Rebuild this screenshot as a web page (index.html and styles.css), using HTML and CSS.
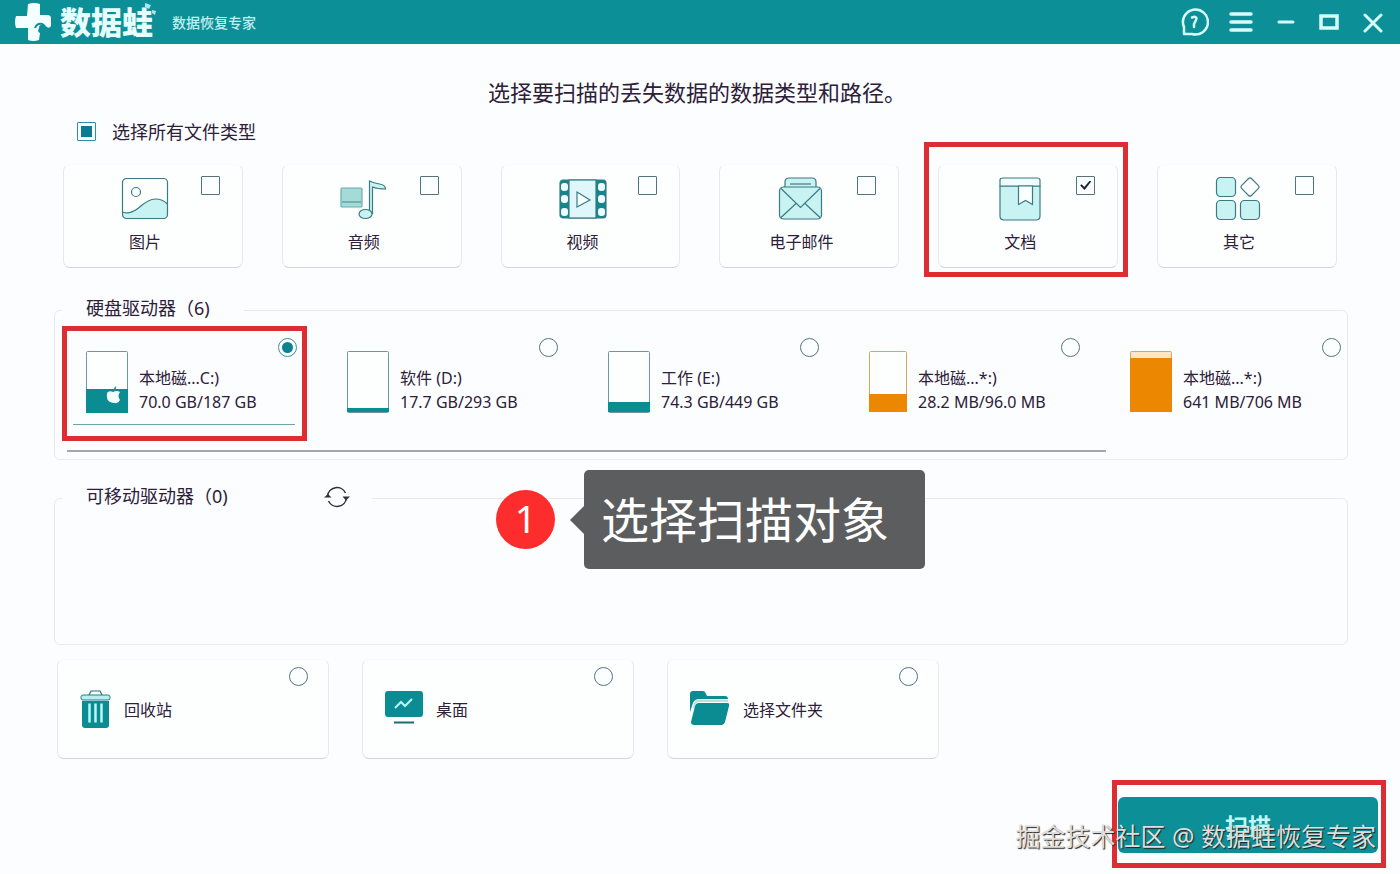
FILE: index.html
```html
<!DOCTYPE html>
<html lang="zh-CN">
<head>
<meta charset="utf-8">
<title>数据蛙 数据恢复专家</title>
<link rel="stylesheet" href="styles.css">
</head>
<body>
<header class="titlebar">
  <svg class="logo" width="36" height="40" viewBox="0 0 36 40" aria-hidden="true">
    <path fill="#f4ffff" d="M13 2q6-2 12 0v11h7q4 0 4 3v8q-2 3-4 1l-3-2q-5-1-5 3l-1 3q1 2 2 2l-1 7q-6 2-11 0V26H1q-2-6 0-12h11z"/>
    <path fill="none" stroke="#0b8f97" stroke-width="2" d="M20 26q2-5 7-4l3 2"/>
  </svg>
  <span class="brand">数据蛙<svg class="splash" width="12" height="14" viewBox="0 0 12 14" aria-hidden="true"><path fill="#a5e9f4" d="M1 1l6 2-2 4-4-2zM8 8l4 1-1 4-3-2z"/></svg></span>
  <span class="subtitle">数据恢复专家</span>
  <nav class="window-controls">
    <button type="button" aria-label="帮助"><svg width="30" height="30" viewBox="0 0 30 30"><path d="M5 27v-7A12.500 12.500 0 1 1 13 27z" stroke-width="2.500"/><path d="M13 10.500q4-1.500 4.500.5 0 1.500-1.500 4l-1 2v3" stroke-width="2.500"/></svg></button>
    <button type="button" aria-label="菜单"><svg width="24" height="24" viewBox="0 0 24 24"><path d="M2 4h20M2 12h20M2 20h20" stroke-width="3.500"/></svg></button>
    <button type="button" aria-label="最小化"><svg width="18" height="24" viewBox="0 0 18 24"><path d="M2 12h14" stroke-width="3"/></svg></button>
    <button type="button" aria-label="最大化"><svg width="20" height="24" viewBox="0 0 20 24"><path d="M2 6h16v12H2z" stroke-width="3.500" stroke-linejoin="miter"/></svg></button>
    <button type="button" aria-label="关闭"><svg width="20" height="24" viewBox="0 0 20 24"><path d="M2 5l16 16M18 5L2 21" stroke-width="3"/></svg></button>
  </nav>
</header>

<main class="content">
  <h1 class="heading">选择要扫描的丢失数据的数据类型和路径。</h1>
  <label class="select-all"><input class="box partial" type="checkbox">选择所有文件类型</label>

  <section class="types">
    <label class="card type">
      <span class="type-body">
        <svg class="line-icon" width="48" height="46" viewBox="0 0 48 46"><path class="tint" stroke="none" d="M1.500 36q7 3 16-4 10-9 17-9 7 0 12 5v10q0 4-4 4h-37q-4 0-4-4z"/><rect x="1.500" y="2.500" width="45" height="40" rx="4"/><circle cx="15" cy="16" r="4.500"/><path d="M1.500 36q7 3 16-4 10-9 17-9 7 0 12 5"/></svg>
        <span>图片</span>
      </span>
      <input class="box" type="checkbox">
    </label>
    <label class="card type">
      <span class="type-body">
        <svg class="line-icon" width="48" height="46" viewBox="0 0 48 46"><rect x="1" y="12" width="21" height="19" rx="1" fill="#a5dad6" stroke="#68aeb0"/><path stroke="#4b9b9e" d="M2 26h19"/><path class="tint" d="M29.500 36V5q4 2 10 3 6 1 6 5-8 0-13-2V38"/><ellipse class="tint" cx="25.500" cy="38" rx="6.500" ry="4.500"/></svg>
        <span>音频</span>
      </span>
      <input class="box" type="checkbox">
    </label>
    <label class="card type">
      <span class="type-body">
        <svg class="line-icon" width="48" height="46" viewBox="0 0 48 46"><rect x="1" y="4" width="46" height="38" rx="3" fill="#13868c"/><rect x="10" y="4" width="27" height="38" fill="#dff6fb"/><g fill="#effcff" stroke="none"><rect x="2" y="7" width="7" height="8" rx="3"/><rect x="2" y="19" width="7" height="8" rx="3"/><rect x="2" y="32" width="7" height="8" rx="3"/><rect x="39" y="7" width="7" height="8" rx="3"/><rect x="39" y="19" width="7" height="8" rx="3"/><rect x="39" y="32" width="7" height="8" rx="3"/></g><path fill="#f7ffff" d="M18 16v15l13-7z"/></svg>
        <span>视频</span>
      </span>
      <input class="box" type="checkbox">
    </label>
    <label class="card type">
      <span class="type-body">
        <svg class="line-icon" width="48" height="46" viewBox="0 0 48 46"><path class="tint" d="M8 11V6q0-4 4-4h23q4 0 4 4v5"/><path d="M13 8h21"/><rect class="tint" x="2.500" y="11" width="42" height="32" rx="4"/><path d="M4 12.500l19.500 19 19.500-19M4 41.500l15-14M43 41.500l-15-14"/></svg>
        <span>电子邮件</span>
      </span>
      <input class="box" type="checkbox">
    </label>
    <label class="card type marked marked-type">
      <span class="type-body">
        <svg class="line-icon" width="48" height="46" viewBox="0 0 48 46"><path class="tint" d="M4 10h40v30q0 4-4 4H8q-4 0-4-4z"/><path fill="#effdfe" d="M4 10V4q0-2 3-2h34q3 0 3 2v6z"/><path fill="#fbffff" d="M22.500 10v18.500l7-4 7 4V10z"/></svg>
        <span>文档</span>
      </span>
      <input class="box" type="checkbox" checked>
    </label>
    <label class="card type">
      <span class="type-body">
        <svg class="line-icon" width="48" height="46" viewBox="0 0 48 46"><rect class="tint" x="1.500" y="1.500" width="19" height="19" rx="4"/><rect class="tint" x="1.500" y="24.500" width="19" height="19" rx="4"/><rect class="tint" x="25.500" y="24.500" width="19" height="19" rx="4"/><rect x="28" y="4" width="14" height="14" rx="2" transform="rotate(45 35 11)"/></svg>
        <span>其它</span>
      </span>
      <input class="box" type="checkbox">
    </label>
  </section>

  <fieldset class="panel">
    <legend><span>硬盘驱动器（6)</span></legend>
    <div class="drives">
      <label class="drive marked selected">
        <svg width="42" height="62" viewBox="0 0 42 62"><rect class="disk" x="0.500" y="0.500" width="41" height="61" rx="1"/><path class="used" d="M0 38h42v24H0z"/><path fill="#f2ffff" d="M21 42q2-3 6-1 4-2 7 0-3 4 0 8-2 4-5 3-3 0-5-1-4-2-3-9z"/><path fill="#3b8f96" d="M27 40q0-3 3-5 1 3-3 5z"/></svg>
        <span class="drive-text"><span>本地磁...C:)</span><span>70.0 GB/187 GB</span></span>
        <input class="dot" type="radio" name="source" checked>
      </label>
      <label class="drive">
        <svg width="42" height="62" viewBox="0 0 42 62"><rect class="disk" x="0.500" y="0.500" width="41" height="61" rx="1"/><path class="used" d="M0 57h42v4H0z"/></svg>
        <span class="drive-text"><span>软件 (D:)</span><span>17.7 GB/293 GB</span></span>
        <input class="dot" type="radio" name="source">
      </label>
      <label class="drive">
        <svg width="42" height="62" viewBox="0 0 42 62"><rect class="disk" x="0.500" y="0.500" width="41" height="61" rx="1"/><path class="used" d="M0 51h42v10H0z"/></svg>
        <span class="drive-text"><span>工作 (E:)</span><span>74.3 GB/449 GB</span></span>
        <input class="dot" type="radio" name="source">
      </label>
      <label class="drive system">
        <svg width="38" height="62" viewBox="0 0 38 62"><rect class="disk" x="0.500" y="0.500" width="37" height="60" rx="1"/><path class="used" d="M0 43h38v18H0z"/></svg>
        <span class="drive-text"><span>本地磁...*:)</span><span>28.2 MB/96.0 MB</span></span>
        <input class="dot" type="radio" name="source">
      </label>
      <label class="drive system">
        <svg width="42" height="62" viewBox="0 0 42 62"><rect class="disk" x="0.500" y="0.500" width="41" height="60" rx="1"/><path class="used" d="M0 7h42v54H0z"/></svg>
        <span class="drive-text"><span>本地磁...*:)</span><span>641 MB/706 MB</span></span>
        <input class="dot" type="radio" name="source">
      </label>
    </div>
    <div class="scroll-track"><div class="scroll-thumb"></div></div>
  </fieldset>

  <fieldset class="panel removable">
    <legend><span>可移动驱动器（0)</span><button class="refresh" type="button" aria-label="刷新"><svg width="26" height="22" viewBox="0 0 26 22" fill="none" stroke="#2e3338" stroke-width="1.500"><path d="M3.500 10a9.500 9.500 0 0 1 18-3M22.500 12a9.500 9.500 0 0 1-18 3"/><path fill="#2e3338" stroke="none" d="M0 11.500l4-3.500 3.500 3.500zM18.500 10.500h7.500l-4 4z"/></svg></button></legend>
  </fieldset>

  <section class="places">
    <label class="card place">
      <svg width="31" height="38" viewBox="0 0 31 38"><path fill="none" stroke="#2a6f78" stroke-width="1.200" d="M9 5l2-4h9l2 4"/><rect x="1" y="5" width="29" height="5" rx="2" fill="#b5f0f0" stroke="#2a7f86"/><path fill="#0b8b92" d="M2 11h27v24q0 3-3 3H5q-3 0-3-3z"/><path stroke="#baf7f8" stroke-width="2.500" d="M9.500 13.500v19M15.500 13.500v19M21.500 13.500v19"/></svg>
      <span>回收站</span><input class="dot" type="radio" name="source">
    </label>
    <label class="card place">
      <svg width="38" height="38" viewBox="0 0 38 38"><rect y="1" width="38" height="26" rx="3" fill="#0b8b92"/><path fill="none" stroke="#b4f7f8" stroke-width="2" d="M10 18l6-6 4 4 7-7"/><path stroke="#176f78" stroke-width="2" d="M9 32.500h20"/></svg>
      <span>桌面</span><input class="dot" type="radio" name="source">
    </label>
    <label class="card place">
      <svg width="40" height="38" viewBox="0 0 40 38"><path fill="#0b8b92" d="M0 22V4q0-3 3-3h10q2 0 3 3l1 2h18q3 0 3 3H8q-5 1-6 7z"/><path fill="#b4e5dc" d="M3 18q1-8 5-8.500h30V12H8q-3 1-4 7z"/><path fill="#0b8b92" d="M9 13h28q3 0 2 3l-4 16q-1 3-3 3H4q-3 0-3-3l4-16q1-3 4-3z"/></svg>
      <span>选择文件夹</span><input class="dot" type="radio" name="source">
    </label>
  </section>

  <footer class="actions">
    <button class="scan marked marked-scan" type="button">扫描</button>
  </footer>
</main>

<div class="callout">
  <span class="step">1</span>
  <span class="bubble">选择扫描对象</span>
</div>
<div class="watermark">掘金技术社区 @ 数据蛙恢复专家</div>
</body>
</html>
```
FILE: styles.css
```css
* {
  box-sizing: border-box;
}

body {
  position: relative;
  min-height: 100vh;
  margin: 0;
  background: #fcfdff;
  color: #2d2038;
  font-family: "Noto Sans", "Noto Sans CJK SC", sans-serif;
  font-size: 16px;
}

svg {
  display: block;
  flex: none;
}

button {
  padding: 0;
  border: 0;
  background: none;
  font-family: inherit;
}

/* Title bar */
.titlebar {
  display: flex;
  align-items: center;
  height: 44px;
  padding: 0 17px 0 15px;
  background: #0d8f97;
  color: #e6ffff;
}

.brand {
  position: relative;
  margin-left: 9px;
  font-size: 31px;
  font-weight: 900;
  line-height: 40px;
}

.splash {
  position: absolute;
  top: 0;
  right: -3px;
}

.subtitle {
  margin-left: 19px;
  font-size: 14px;
  font-weight: 500;
  color: #c0f0f1;
}

.window-controls {
  display: flex;
  align-items: center;
  gap: 24px;
  margin-left: auto;
}

.window-controls button:first-child {
  margin-right: -4px;
}

.window-controls svg {
  fill: none;
  stroke: #d5fffc;
  stroke-linecap: round;
  stroke-linejoin: round;
}

/* Page */
.content {
  padding: 32px 52px 0 54px;
}

.heading {
  margin: 0;
  padding-right: 8px;
  font-size: 22px;
  font-weight: 400;
  line-height: 32px;
  text-align: center;
}

.select-all {
  display: flex;
  align-items: center;
  gap: 16px;
  width: max-content;
  height: 24px;
  margin: 11px 0 21px 23px;
  font-size: 18px;
}

.box,
.dot {
  display: grid;
  flex: none;
  place-content: center;
  width: 19px;
  height: 19px;
  margin: 0;
  border: 1px solid #56737c;
  background: #fbffff;
  appearance: none;
}

.box {
  border-radius: 1px;
}

.dot {
  border-radius: 50%;
}

.box.partial {
  border-color: #2f8faa;
}

.box.partial::before {
  width: 11px;
  height: 11px;
  background: #0b7c96;
  content: "";
}

.box:checked::before {
  width: 11px;
  height: 10px;
  background: #15252b;
  clip-path: polygon(0 50%, 12% 38%, 38% 66%, 88% 0, 100% 10%, 40% 96%);
  content: "";
}

.dot:checked {
  border-color: #3e8da5;
}

.dot:checked::before {
  width: 11px;
  height: 11px;
  border-radius: 50%;
  background: #0b8290;
  content: "";
}

.card {
  border: 1px solid #e6eaf0;
  border-top-color: #f8fafd;
  border-bottom-color: #cfd5dc;
  border-radius: 7px;
  background: #fdffff;
}

/* Red frames drawn over the highlighted controls */
.marked {
  position: relative;
}

.marked::after {
  position: absolute;
  inset: 0;
  border: 5px solid #dc2d33;
  content: "";
  pointer-events: none;
}

.marked-type::after {
  inset: -23px -11px -10px -15px;
}

.marked-scan::after {
  inset: -17px -8px -15px -6px;
}

/* File types */
.types {
  display: grid;
  grid-template-columns: repeat(6, 1fr);
  gap: 39px;
  padding: 0 11px 0 9px;
}

.type {
  display: flex;
  align-items: flex-start;
  height: 104px;
  padding: 11px 22px 0 25px;
}

.type-body {
  display: flex;
  flex: 1;
  flex-direction: column;
  align-items: center;
  gap: 8px;
  line-height: 24px;
}

.line-icon {
  fill: none;
  stroke: #397b82;
  stroke-width: 1.2;
}

.tint {
  fill: #c9f3f3;
}

/* Drive panels */
.panel {
  min-width: 0;
  height: 162px;
  margin: 30px 0 0;
  padding: 0 7px;
  border: 1px solid #e6eaf0;
  border-radius: 6px;
}

.panel legend {
  display: flex;
  align-items: flex-start;
  height: 24px;
  margin-left: 0;
  padding: 0 34px 0 24px;
  font-size: 18px;
  line-height: 20px;
}

.panel.removable {
  height: 159px;
  margin-top: 26px;
}

.panel.removable legend {
  padding-right: 22px;
}

.refresh {
  margin-left: 96px;
}

.drives {
  display: flex;
  gap: 16px;
  margin-top: 4px;
}

.drive {
  display: flex;
  flex: 0 0 245px;
  height: 115px;
  padding: 12px 10px 0 24px;
}

.drive > svg {
  margin-top: 13px;
}

.drive-text {
  display: flex;
  flex: 1;
  flex-direction: column;
  margin: 28px 0 0 11px;
  line-height: 24px;
  white-space: nowrap;
}

.drive.selected {
  background: linear-gradient(#6aa5a9, #6aa5a9) 11px 98px / 222px 1px no-repeat;
}

.disk {
  fill: #fdffff;
  stroke: #6f979f;
}

.used {
  fill: #0b8b92;
}

.system .disk {
  stroke: #d9a75c;
}

.system:last-child .disk {
  fill: #fde7c4;
}

.system .used {
  fill: #eb8700;
}

.scroll-track {
  margin: 9px 6px 0 5px;
}

.scroll-thumb {
  width: 82%;
  height: 2px;
  background: #a3a6aa;
}

/* Other locations */
.places {
  display: flex;
  gap: 33px;
  margin: 14px 0 0 3px;
}

.place {
  display: flex;
  flex: 0 1 272px;
  align-items: center;
  gap: 13px;
  height: 100px;
  padding: 0 20px 0 22px;
}

.place .dot {
  align-self: flex-start;
  margin: 7px 0 0 auto;
}

/* Scan action */
.actions {
  display: flex;
  justify-content: flex-end;
  margin: 38px -30px 0 0;
}

.scan {
  width: 260px;
  height: 56px;
  border-radius: 6px;
  background: #0d8f97;
  color: #c4f7f7;
  font-size: 23px;
  font-weight: 700;
}

/* Overlays */
.callout {
  position: absolute;
  top: 470px;
  left: 496px;
  display: flex;
  align-items: center;
  gap: 29px;
  color: #fff;
}

.step {
  width: 59px;
  height: 59px;
  border-radius: 50%;
  background: #fe2d2d;
  font-size: 38px;
  line-height: 56px;
  text-align: center;
}

.bubble {
  position: relative;
  height: 99px;
  padding: 0 36px 0 17px;
  border-radius: 5px;
  background: #5c5d5e;
  font-size: 48px;
  line-height: 100px;
}

.bubble::before {
  position: absolute;
  top: 35px;
  left: -14px;
  width: 15px;
  height: 30px;
  background: #5c5d5e;
  clip-path: polygon(0 50%, 100% 0, 100% 100%);
  content: "";
}

.watermark {
  position: absolute;
  right: 24px;
  bottom: 20px;
  color: #dedede;
  font-size: 25px;
  line-height: 36px;
  text-shadow: 1px 1px 1px #222;
  white-space: nowrap;
}
```
